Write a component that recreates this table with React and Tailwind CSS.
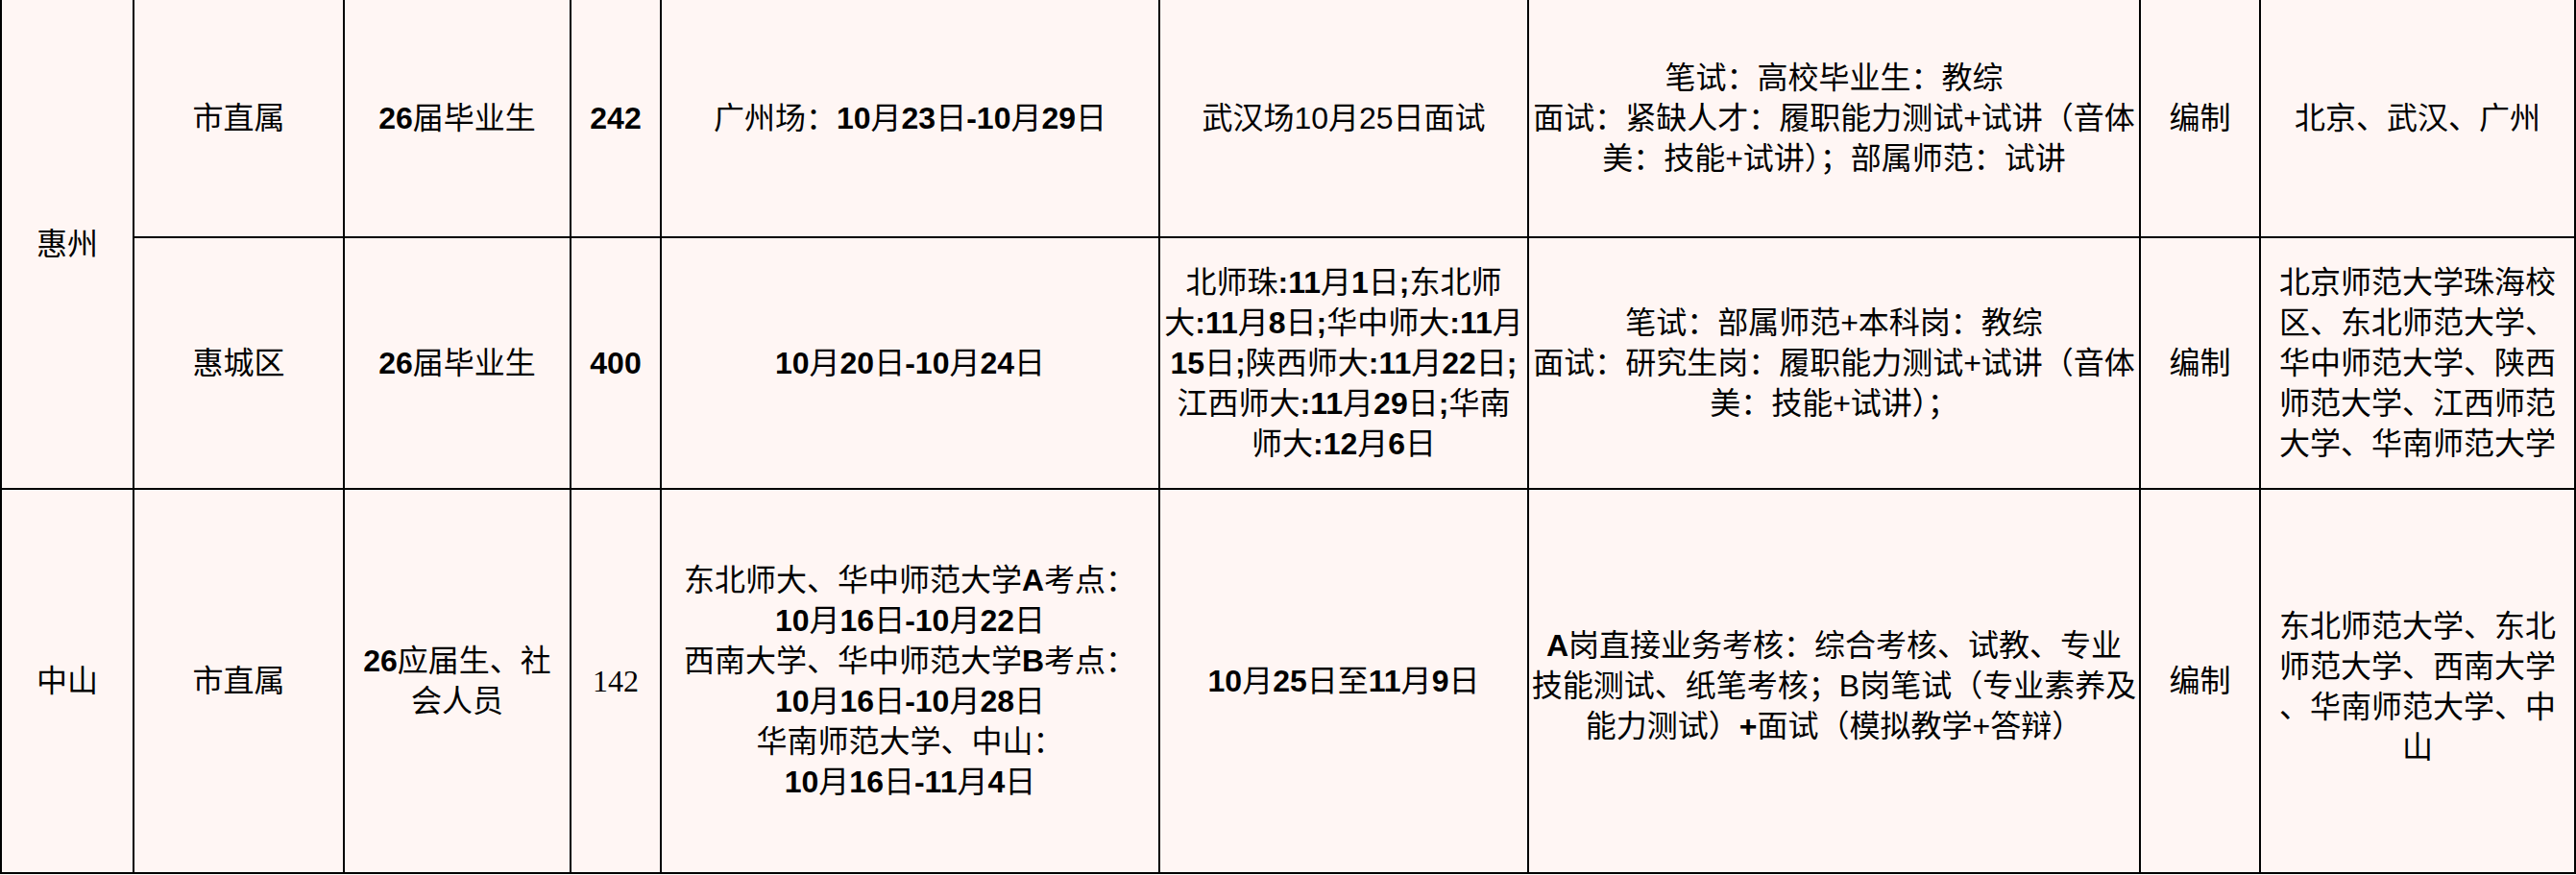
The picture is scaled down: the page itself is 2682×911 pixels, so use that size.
const cell = 'flex items-center justify-center text-center border-r-2 border-b-2 border-black px-1 overflow-visible';

function bold(s) {
  return s.split(/([0-9A-Za-z\-:;]+)/).map((p, i) =>
    /[0-9A-Za-z\-:;]/.test(p) ? <b key={i} className="font-bold">{p}</b> : p
  );
}

function Lines({ lines, rich = true }) {
  return (
    <div className="flex flex-col items-center">
      {lines.map((l, i) => (
        <div key={i} className="whitespace-nowrap">{typeof l === 'string' && rich ? bold(l) : l}</div>
      ))}
    </div>
  );
}

function Cell({ children, className = '' }) {
  return <div className={`${cell} ${className}`}>{children}</div>;
}

export default function App() {
  return (
    <div className="min-h-screen bg-[#fff6f4] text-black">
      <div
        className="grid grid-cols-[138px_219px_236px_94px_519px_384px_637px_125px_328px] grid-rows-[248px_262px_400px] border-l-2 border-black text-[32px] leading-[42px]"
        style={{ fontFamily: '"Liberation Sans", "Noto Sans CJK SC", sans-serif' }}
      >
        {/* 惠州 */}
        <Cell className="row-span-2">惠州</Cell>
        <Cell>市直属</Cell>
        <Cell><Lines lines={['26届毕业生']} /></Cell>
        <Cell><b className="font-bold">242</b></Cell>
        <Cell><Lines lines={['广州场：10月23日-10月29日']} /></Cell>
        <Cell>武汉场10月25日面试</Cell>
        <Cell>
          <Lines rich={false} lines={[
            '笔试：高校毕业生：教综',
            '面试：紧缺人才：履职能力测试+试讲（音体',
            '美：技能+试讲）；部属师范：试讲',
          ]} />
        </Cell>
        <Cell>编制</Cell>
        <Cell>北京、武汉、广州</Cell>

        <Cell>惠城区</Cell>
        <Cell><Lines lines={['26届毕业生']} /></Cell>
        <Cell><b className="font-bold">400</b></Cell>
        <Cell><Lines lines={['10月20日-10月24日']} /></Cell>
        <Cell className="px-0">
          <Lines lines={[
            '北师珠:11月1日;东北师',
            '大:11月8日;华中师大:11月',
            '15日;陕西师大:11月22日;',
            '江西师大:11月29日;华南',
            '师大:12月6日',
          ]} />
        </Cell>
        <Cell>
          <Lines rich={false} lines={[
            '笔试：部属师范+本科岗：教综',
            '面试：研究生岗：履职能力测试+试讲（音体',
            '美：技能+试讲）；',
          ]} />
        </Cell>
        <Cell>编制</Cell>
        <Cell>
          <Lines rich={false} lines={[
            '北京师范大学珠海校',
            '区、东北师范大学、',
            '华中师范大学、陕西',
            '师范大学、江西师范',
            '大学、华南师范大学',
          ]} />
        </Cell>

        {/* 中山 */}
        <Cell>中山</Cell>
        <Cell>市直属</Cell>
        <Cell><Lines lines={['26应届生、社', '会人员']} /></Cell>
        <Cell><span style={{ fontFamily: '"Liberation Serif", serif' }}>142</span></Cell>
        <Cell>
          <Lines lines={[
            '东北师大、华中师范大学A考点：',
            '10月16日-10月22日',
            '西南大学、华中师范大学B考点：',
            '10月16日-10月28日',
            '华南师范大学、中山：',
            '10月16日-11月4日',
          ]} />
        </Cell>
        <Cell><Lines lines={['10月25日至11月9日']} /></Cell>
        <Cell className="pt-[10px]">
          <Lines rich={false} lines={[
            <><b className="font-bold">A</b>岗直接业务考核：综合考核、试教、专业</>,
            '技能测试、纸笔考核；B岗笔试（专业素养及',
            <>能力测试）<b className="font-bold">+</b>面试（模拟教学+答辩）</>,
          ]} />
        </Cell>
        <Cell>编制</Cell>
        <Cell className="pt-[12px]">
          <Lines rich={false} lines={[
            '东北师范大学、东北',
            '师范大学、西南大学',
            '、华南师范大学、中',
            '山',
          ]} />
        </Cell>
      </div>
    </div>
  );
}
